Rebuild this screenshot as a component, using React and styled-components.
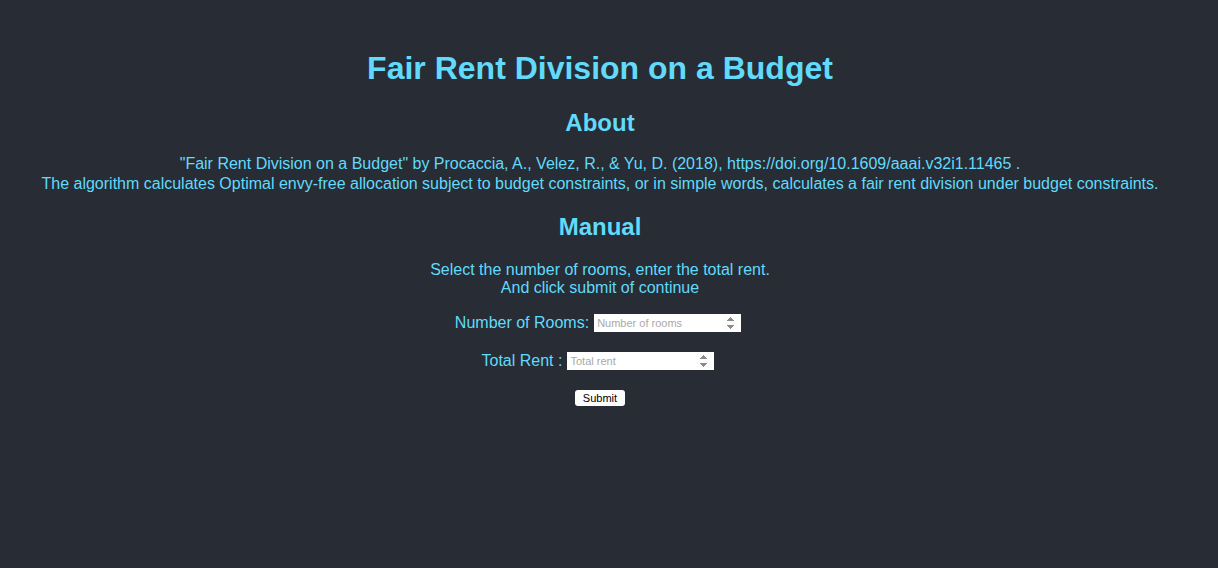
import React from 'react';
import styled, { createGlobalStyle } from 'styled-components';

const GlobalStyle = createGlobalStyle`
  html, body {
    margin: 0;
    padding: 0;
    background: #282c34;
    min-height: 100%;
  }
  body {
    font-family: "Liberation Sans", Arial, sans-serif;
  }
`;

const App = () => {
  return (
    <>
      <GlobalStyle />
      <Page>
        <Title>Fair Rent Division on a Budget</Title>
        <SectionTitle gap={22}>About</SectionTitle>
        <Text spaced gap={17}>
          "Fair Rent Division on a Budget" by Procaccia, A., Velez, R., &amp; Yu, D. (2018), https://doi.org/10.1609/aaai.v32i1.11465 .
          <br />
          The algorithm calculates Optimal envy-free allocation subject to budget constraints, or in simple words, calculates a fair rent division under budget constraints.
        </Text>
        <SectionTitle gap={20}>Manual</SectionTitle>
        <Text gap={20}>
          Select the number of rooms, enter the total rent.
          <br />
          And click submit of continue
        </Text>
        <Form onSubmit={(e) => e.preventDefault()}>
          <Row>
            <Label htmlFor="rooms">Number of Rooms:</Label>
            <NumberInput id="rooms" type="number" placeholder="Number of rooms" />
          </Row>
          <Row>
            <Label htmlFor="rent">Total Rent :</Label>
            <NumberInput id="rent" type="number" placeholder="Total rent" />
          </Row>
          <SubmitButton type="submit">Submit</SubmitButton>
        </Form>
      </Page>
    </>
  );
};

export default App;

const Page = styled.div`
  min-height: 568px;
  box-sizing: border-box;
  padding: 29px 18px 0 0;
  display: flex;
  flex-direction: column;
  align-items: center;
  text-align: center;
  color: #61dafb;
`;

const Title = styled.h1`
  font-size: 32px;
  font-weight: 700;
  margin: 21px 0 0;
  line-height: 37px;
`;

const SectionTitle = styled.h2`
  font-size: 24px;
  font-weight: 700;
  margin: ${(props) => props.gap}px 0 0;
  line-height: 28px;
`;

const Text = styled.p`
  font-size: 16px;
  margin: ${(props) => props.gap}px 0 0;
  line-height: ${(props) => (props.spaced ? '19.5px' : '18px')};
`;

const Form = styled.form`
  margin-top: 17px;
  display: flex;
  flex-direction: column;
  align-items: center;
  gap: 20px;
`;

const Row = styled.div`
  display: flex;
  align-items: center;
  gap: 5px;
  height: 18px;
  padding-right: 4px;
`;

const Label = styled.label`
  font-size: 16px;
`;

const NumberInput = styled.input`
  width: 147px;
  height: 18px;
  box-sizing: border-box;
  border: none;
  padding: 0 3px;
  font-family: "Liberation Sans", Arial, sans-serif;
  font-size: 11px;
  color: #000;
  background: #fff;
  outline: none;

  &::placeholder {
    color: #a9a9a9;
  }

  &::-webkit-inner-spin-button {
    opacity: 1;
    height: 14px;
  }
`;

const SubmitButton = styled.button`
  width: 50px;
  height: 16px;
  padding: 0;
  border: none;
  border-radius: 3px;
  background: #fff;
  color: #000;
  font-family: "Liberation Sans", Arial, sans-serif;
  font-size: 11px;
  line-height: 16px;
  cursor: pointer;
`;
